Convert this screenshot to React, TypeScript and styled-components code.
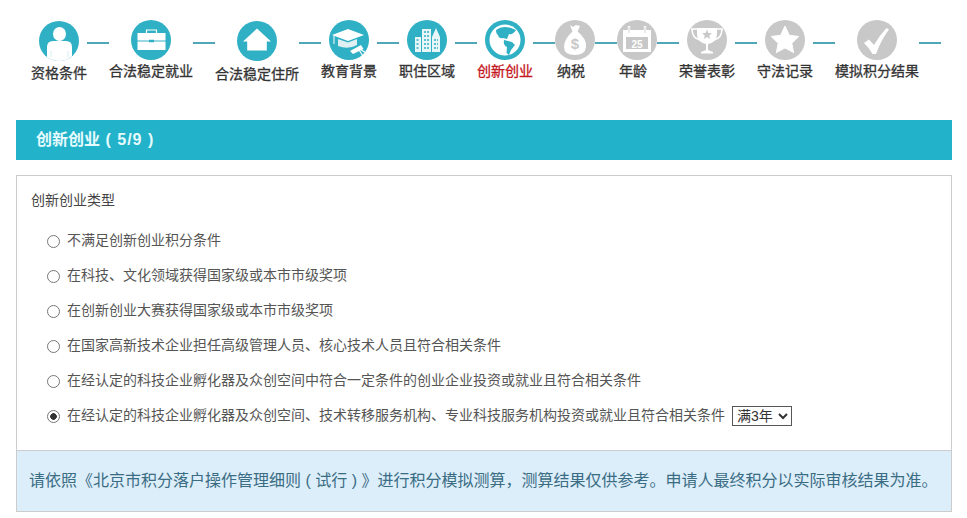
import React from "react";
import styled, {createGlobalStyle} from "styled-components";

const FONT = `"Liberation Sans", "Noto Sans CJK SC", sans-serif`;

const GlobalStyle = createGlobalStyle`
  html, body {
    margin: 0;
    padding: 0;
    background: #fff;
    font-family: ${FONT};
  }
`;

const TEAL = "#2fb0c4";
const GREY = "#c8c8c8";

const UserIcon = () => (
    <svg viewBox="0 0 40 40" width="40" height="40">
        <circle cx="20" cy="20" r="20" fill={TEAL}/>
        <ellipse cx="20.5" cy="13" rx="6.5" ry="7" fill="#fff"/>
        <path d="M8 26 Q8 20 14 20 H27 Q33 20 33 26 V35.2 A20 20 0 0 1 8 36 Z" fill="#fff"/>
        <path d="M12 30 V36 M29 30 V36" stroke="#d5eef2" strokeWidth="1"/>
    </svg>
);

const CaseIcon = () => (
    <svg viewBox="0 0 40 40" width="40" height="40">
        <circle cx="20" cy="20" r="20" fill={TEAL}/>
        <path d="M15.5 13 V10 H25.5 V13" fill="none" stroke="#fff" strokeWidth="1.2"/>
        <path d="M6.5 13 H34.5 V20.6 H23 V19.8 H18 V20.6 H6.5 Z" fill="#fff"/>
        <path d="M6.5 21.4 H18 V22.2 H23 V21.4 H34.5 V30 H6.5 Z" fill="#fff"/>
    </svg>
);

const HomeIcon = () => (
    <svg viewBox="0 0 40 40" width="40" height="40">
        <circle cx="20" cy="20" r="20" fill={TEAL}/>
        <path d="M20 7.5 L34 20.5 H29.8 V29.5 H10.2 V20.5 H6 Z" fill="#fff"/>
    </svg>
);

const CapIcon = () => (
    <svg viewBox="0 0 40 40" width="40" height="40">
        <circle cx="20" cy="20" r="20" fill={TEAL}/>
        <path d="M3 15 L19 9 L35 15 L19 21 Z" fill="#fff"/>
        <path d="M9 19 V26 Q19 30 28 25 V19 L19 22.5 Z" fill="#dfeff2"/>
        <path d="M5 15.5 V24" stroke="#fff" strokeWidth="1"/>
        <path d="M21 31 L32 25 L34.5 29 L24 34 Z" fill="#fff"/>
        <path d="M30 30 L34 36 M31 29 L37 33" stroke="#fff" strokeWidth="1.2"/>
    </svg>
);

const CityIcon = () => (
    <svg viewBox="0 0 40 40" width="40" height="40">
        <circle cx="20" cy="20" r="20" fill={TEAL}/>
        <path d="M8 17 H14 V32 H8 Z" fill="#e9f6f8"/>
        <path d="M15 9 H24 V32 H15 Z" fill="#e9f6f8"/>
        <path d="M25 32 V17 L29 8 L33 17 V32 Z" fill="#e9f6f8"/>
        <path d="M9.5 20 H12.5 M9.5 24 H12.5 M9.5 28 H12.5 M17 12 H22 M17 16 H22 M17 20 H22 M17 24 H22 M17 28 H22 M27 20 H31 M27 24 H31 M27 28 H31"
              stroke={TEAL} strokeWidth="1.6" strokeDasharray="2 1"/>
    </svg>
);

const GlobeIcon = () => (
    <svg viewBox="0 0 40 40" width="40" height="40">
        <circle cx="20" cy="20" r="20" fill={TEAL}/>
        <circle cx="20" cy="20" r="15.5" fill="#fff"/>
        <path d="M11 10 Q17 5 26 8 L31 10 Q28 15 24 14 L22 19 L18 18 Q14 19 13 15 Q11 14 11 10 Z" fill={TEAL}/>
        <path d="M19 20 L27 22 L30 25 L26 30 L24 35 L21.5 33 L22 27 Q18 25 19 20 Z" fill={TEAL}/>
    </svg>
);

const MoneyIcon = () => (
    <svg viewBox="0 0 40 40" width="40" height="40">
        <circle cx="20" cy="20" r="20" fill={GREY}/>
        <path d="M15 5 L18 7 L21 5 L25 6 L22.5 11.5 Q32 19 31 27 Q30 35 20 35 Q9 35 9 27 Q9 19 17.5 11.5 Z" fill="#fff"/>
        <text x="20" y="29" textAnchor="middle" fontSize="15" fontWeight="700" fill={GREY} fontFamily={FONT}>$</text>
    </svg>
);

const CalendarIcon = () => (
    <svg viewBox="0 0 40 40" width="40" height="40">
        <circle cx="20" cy="20" r="20" fill={GREY}/>
        <path d="M6 10 H34 V32 H6 Z" fill="#fff"/>
        <path d="M12 6 V12 M28 6 V12" stroke="#fff" strokeWidth="2.4"/>
        <path d="M12 7 V13 M28 7 V13" stroke={GREY} strokeWidth="0.8"/>
        <path d="M9 17 H31 V29 H9 Z" fill={GREY}/>
        <text x="20" y="27.5" textAnchor="middle" fontSize="10" fontWeight="700" fill="#fff" fontFamily={FONT}>25</text>
    </svg>
);

const TrophyIcon = () => (
    <svg viewBox="0 0 40 40" width="40" height="40">
        <circle cx="20" cy="20" r="20" fill={GREY}/>
        <path d="M10 8 H30 V14 Q30 22 21 24 V30 L26 32 V33.5 H14 V32 L19 30 V24 Q10 22 10 14 Z" fill="#fff"/>
        <path d="M10 9 H5 Q5 18 13 20 M30 9 H35 Q35 18 27 20" fill="none" stroke="#fff" strokeWidth="1.6"/>
        <path d="M20 9.5 L21.4 13 L25 13.2 L22.2 15.5 L23.2 19 L20 17 L16.8 19 L17.8 15.5 L15 13.2 L18.6 13 Z" fill={GREY}/>
    </svg>
);

const StarIcon = () => (
    <svg viewBox="0 0 40 40" width="40" height="40">
        <circle cx="20" cy="20" r="20" fill={GREY}/>
        <path d="M20 6 L24.3 15.3 L33.8 16.5 L26.8 23.3 L28.6 32.6 L20 27.9 L11.4 32.6 L13.2 23.3 L6.2 16.5 L15.7 15.3 Z" fill="#fff" stroke="#fff" strokeLinejoin="round"/>
    </svg>
);

const CheckIcon = () => (
    <svg viewBox="0 0 40 40" width="40" height="40">
        <circle cx="20" cy="20" r="20" fill={GREY}/>
        <path d="M7 23 L12 19.5 L17 25 Q22 16 29.5 8 L32 9.5 Q24 20 19 34 L15.5 34 Q12 27.5 7 23 Z" fill="#fff"/>
    </svg>
);

interface IStep {
    label: string;
    icon: React.ReactNode;
    drop?: number;
    labelDrop?: number;
    labelLeft?: boolean;
    active?: boolean;
}

const steps: IStep[] = [
    {label: "资格条件", icon: <UserIcon/>, drop: 1, labelDrop: 1},
    {label: "合法稳定就业", icon: <CaseIcon/>},
    {label: "合法稳定住所", icon: <HomeIcon/>, drop: 1, labelDrop: 2},
    {label: "教育背景", icon: <CapIcon/>},
    {label: "职住区域", icon: <CityIcon/>},
    {label: "创新创业", icon: <GlobeIcon/>, active: true},
    {label: "纳税", icon: <MoneyIcon/>, labelLeft: true},
    {label: "年龄", icon: <CalendarIcon/>, labelLeft: true},
    {label: "荣誉表彰", icon: <TrophyIcon/>},
    {label: "守法记录", icon: <StarIcon/>},
    {label: "模拟积分结果", icon: <CheckIcon/>},
];

const options = [
    "不满足创新创业积分条件",
    "在科技、文化领域获得国家级或本市市级奖项",
    "在创新创业大赛获得国家级或本市市级奖项",
    "在国家高新技术企业担任高级管理人员、核心技术人员且符合相关条件",
    "在经认定的科技企业孵化器及众创空间中符合一定条件的创业企业投资或就业且符合相关条件",
    "在经认定的科技企业孵化器及众创空间、技术转移服务机构、专业科技服务机构投资或就业且符合相关条件",
];

const noticeText = "请依照《北京市积分落户操作管理细则 ( 试行 ) 》进行积分模拟测算\uFF0C测算结果仅供参考。申请人最终积分以实际审核结果为准。";

const App = () => {
    return (
        <Page>
            <GlobalStyle/>
            <StepBar>
                {steps.map((step) => (
                    <React.Fragment key={step.label}>
                        <Step $drop={step.drop || 0}>
                            <StepCircle>{step.icon}</StepCircle>
                            <StepLabel $active={!!step.active} $drop={step.labelDrop || 0} $left={!!step.labelLeft}>
                                {step.label}
                            </StepLabel>
                        </Step>
                        <Connector/>
                    </React.Fragment>
                ))}
            </StepBar>
            <Banner>创新创业<BannerCount> ( 5/9 )</BannerCount></Banner>
            <Panel>
                <PanelBody>
                    <PanelTitle>创新创业类型</PanelTitle>
                    <OptionList>
                        {options.map((text, i) => (
                            <Option key={text}>
                                <Radio type="radio" name="kind" defaultChecked={i === options.length - 1}/>
                                <OptionText>{text}</OptionText>
                                {i === options.length - 1 && (
                                    <YearSelect defaultValue="3">
                                        <option value="3">满3年</option>
                                        <option value="2">满2年</option>
                                        <option value="1">满1年</option>
                                    </YearSelect>
                                )}
                            </Option>
                        ))}
                    </OptionList>
                </PanelBody>
                <Notice>{noticeText}</Notice>
            </Panel>
        </Page>
    );
};

const Page = styled.div`
  width: 967px;
  height: 518px;
  overflow: hidden;
  padding: 20px 15px 0 16px;
  box-sizing: border-box;
`;

const StepBar = styled.div`
  display: flex;
  align-items: flex-start;
  height: 100px;
  padding-left: 15px;
`;

const Step = styled.div<{ $drop: number }>`
  display: flex;
  flex-direction: column;
  align-items: center;
  flex: none;
  min-width: 40px;
  margin-top: ${p => p.$drop}px;
`;

const StepCircle = styled.div`
  width: 40px;
  height: 40px;
  svg {
    display: block;
  }
`;

const StepLabel = styled.div<{ $active: boolean; $drop: number; $left: boolean }>`
  margin-top: ${p => p.$drop}px;
  margin-right: ${p => (p.$left ? 8 : 0)}px;
  font-size: 14px;
  line-height: 22px;
  font-weight: 400;
  white-space: nowrap;
  color: ${p => (p.$active ? "#c4161c" : "#333")};
  -webkit-text-stroke: 0.3px currentColor;
`;

const Connector = styled.div`
  flex: none;
  width: 22px;
  height: 2px;
  margin-top: 22px;
  background: #4fa8b8;
`;

const Banner = styled.div`
  height: 40px;
  padding-left: 20px;
  background: #22b2c9;
  color: #e6fbfd;
  font-size: 16px;
  font-weight: 700;
  line-height: 40px;
  white-space: pre;
`;

const BannerCount = styled.span`
  letter-spacing: 1px;
`;

const Panel = styled.div`
  margin-top: 15px;
  border: 1px solid #ccc;
`;

const PanelBody = styled.div`
  height: 274px;
  padding: 14px 14px 0;
  box-sizing: border-box;
  background: #fff;
`;

const PanelTitle = styled.div`
  font-size: 14px;
  line-height: 20px;
  color: #444;
`;

const OptionList = styled.div`
  display: flex;
  flex-direction: column;
  margin-top: 14px;
  padding-left: 16px;
`;

const Option = styled.label`
  display: flex;
  align-items: center;
  height: 35px;
  font-size: 14px;
  color: #555;
  white-space: nowrap;
`;

const OptionText = styled.span`
  padding-bottom: 6px;
`;

const Radio = styled.input`
  appearance: none;
  flex: none;
  width: 13px;
  height: 13px;
  margin: 0 7px 0 0;
  border: 1px solid #777;
  border-radius: 50%;
  background: #fff;
  box-sizing: border-box;
  &:checked {
    background: radial-gradient(circle, #333 0 3px, #fff 3.6px);
  }
`;

const YearSelect = styled.select`
  width: 60px;
  height: 20px;
  margin: 0 0 2px 7px;
  padding: 0;
  border: 1px solid #555;
  border-radius: 0;
  background: #fff;
  color: #333;
  font-family: ${FONT};
  font-size: 14px;
`;

const Notice = styled.div`
  height: 61px;
  padding-left: 12px;
  border-top: 1px solid #ccc;
  box-sizing: border-box;
  background: #dceefa;
  color: #3a6c84;
  font-size: 16px;
  line-height: 60px;
  white-space: pre;
`;

export default App;
